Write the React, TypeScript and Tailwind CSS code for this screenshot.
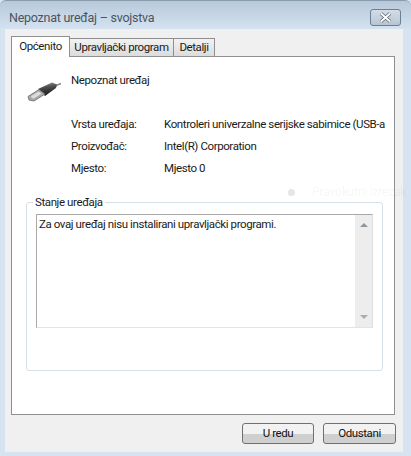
import React from "react";

const FONT = "font-['Roboto','Noto_Sans',sans-serif]";

function UsbIcon() {
  return (
    <svg width="36" height="24" viewBox="0 0 36 24">
      <defs>
        <linearGradient id="body" x1="0" y1="0" x2="0.2" y2="1">
          <stop offset="0" stopColor="#9a9a9a" />
          <stop offset="0.45" stopColor="#4a4a4a" />
          <stop offset="1" stopColor="#1c1c1c" />
        </linearGradient>
      </defs>
      <path d="M29 6 L35 3.5" stroke="#8b8b8b" strokeWidth="1.6" fill="none" />
      <path d="M12 9 L26 2.5 L31 4.5 L30 8 L19 16 Z" fill="url(#body)" />
      <path d="M2 16.5 L13 9.5 L19 14 L8 21 L3 20 Z" fill="#a8a8a8" stroke="#6a6a6a" strokeWidth="0.8" />
      <path d="M4.5 16.5 L12.5 11.5 L15.5 13.8 L7.5 18.8 Z" fill="#dcdcdc" />
    </svg>
  );
}

function InfoRow({ label, value }: { label: string; value: string }) {
  return (
    <div className="flex h-[22px] items-center whitespace-nowrap">
      <span className="w-[93px] shrink-0">{label}</span>
      <span>{value}</span>
    </div>
  );
}

function Tab({ label, width, active }: { label: string; width: string; active?: boolean }) {
  if (active) {
    return (
      <div className={`relative z-10 flex h-[20px] items-center justify-center border border-b-0 border-[#8e8f8f] bg-white ${width}`}>
        {label}
        <div className="absolute -bottom-px left-0 h-px w-full bg-white" />
      </div>
    );
  }
  return (
    <div className={`flex h-[18px] items-center justify-center border border-l-0 border-b-0 border-[#8e8f8f] bg-gradient-to-b from-[#f2f2f2] to-[#dcdcdc] ${width}`}>
      {label}
    </div>
  );
}

function ScrollBar() {
  return (
    <div className="flex w-[17px] shrink-0 flex-col items-center justify-between bg-[#ededed] py-[8px]">
      <div className="h-0 w-0 border-x-[4px] border-b-[4px] border-x-transparent border-b-[#8f979e]" />
      <div className="h-0 w-0 border-x-[4px] border-t-[4px] border-x-transparent border-t-[#a6adb3]" />
    </div>
  );
}

function DlgButton({ label, width }: { label: string; width: string }) {
  return (
    <div className={`flex h-[21px] items-center justify-center rounded-[3px] border border-[#707070] bg-gradient-to-b from-[#f2f2f2] from-50% to-[#cfcfcf] to-50% text-[#111] ${width}`}>
      {label}
    </div>
  );
}

export default function App() {
  return (
    <div className={`relative flex h-[456px] w-[411px] flex-col overflow-hidden bg-[#d6e4f2] text-[11.5px] leading-none tracking-[-0.4px] text-[#1a1a1a] ${FONT}`}>
      {/* title bar */}
      <div className="flex h-[29px] shrink-0 items-start justify-between rounded-t-[6px] border-t border-[#8a9bad] bg-gradient-to-b from-[#b8c9da] to-[#d4e2f0] pl-[9px] pr-[10px]">
        <span className="mt-[11px] text-[12.5px] tracking-[-0.25px] text-[#4a5460]">Nepoznat uređaj – svojstva</span>
        <div className="mt-[8px] flex h-[17px] w-[31px] items-center justify-center rounded-[3px] border border-[#6f7f93] bg-gradient-to-b from-[#d3dde8] to-[#b7c5d4]">
          <svg width="13" height="11" viewBox="0 0 13 11">
            <path d="M2 1.5 L11 9.5 M11 1.5 L2 9.5" stroke="#5b6570" strokeWidth="3.4" />
            <path d="M2 1.5 L11 9.5 M11 1.5 L2 9.5" stroke="#fff" strokeWidth="1.8" />
          </svg>
        </div>
      </div>

      {/* dialog body */}
      <div className="ml-[5px] mr-[8px] flex h-[423px] flex-col bg-[#f0f0f0] pl-[6px] pr-[8px] pt-[7px]">
        <div className="flex items-end">
          <Tab label="Općenito" width="w-[59px]" active />
          <Tab label="Upravljački program" width="w-[104px]" />
          <Tab label="Detalji" width="w-[41px]" />
        </div>

        <div className="flex h-[359px] flex-col border border-[#8e8f8f] bg-white pl-[14px] pr-[11px]">
          <div className="flex h-[57px] shrink-0">
            <div className="mt-[23px] w-[45px] shrink-0">
              <UsbIcon />
            </div>
            <div className="mt-[18px]">Nepoznat uređaj</div>
          </div>

          <div className="-mr-[2px] flex h-[88px] shrink-0 flex-col overflow-hidden pl-[45px]">
            <InfoRow label="Vrsta uređaja:" value="Kontroleri univerzalne serijske sabimice (USB-a" />
            <InfoRow label="Proizvođač:" value="Intel(R) Corporation" />
            <InfoRow label="Mjesto:" value="Mjesto 0" />
          </div>

          {/* group box */}
          <div className="relative flex h-[169px] flex-col rounded-[3px] border border-[#d5dfe5] px-[9px] pt-[11px]">
            <span className="absolute -top-[6px] left-[6px] bg-white px-[2px]">Stanje uređaja</span>
            <div className="flex h-[114px] border border-[#a9a9a9] border-b-[#e3e3e3] border-r-[#dedede] bg-white">
              <div className="flex-1 pl-[2px] pt-[4px]">Za ovaj uređaj nisu instalirani upravljački programi.</div>
              <ScrollBar />
            </div>
          </div>
        </div>

        <div className="-mr-px mt-[8px] flex justify-end gap-[9px]">
          <DlgButton label="U redu" width="w-[72px]" />
          <DlgButton label="Odustani" width="w-[73px]" />
        </div>
      </div>

      {/* faint ghost hint showing through the window */}
      <div className="absolute left-[288px] top-[183px] flex h-[19px] items-center text-black/5">
        <span className="h-[7px] w-[7px] rounded-full bg-black/10" />
        <span className="ml-[17px] whitespace-nowrap text-[12.5px]">Pravokutni izrezak</span>
      </div>
    </div>
  );
}
